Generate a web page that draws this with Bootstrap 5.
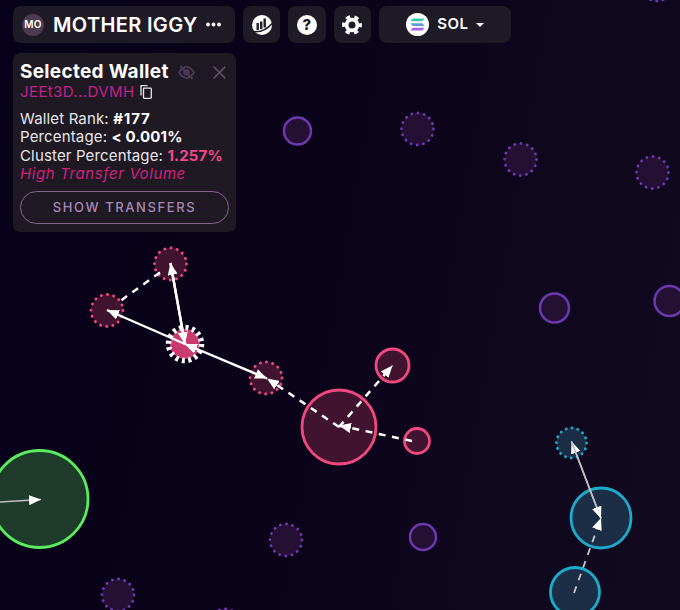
<!DOCTYPE html>
<html lang="en">
<head>
    <meta charset="UTF-8">
    <meta name="viewport" content="width=device-width, initial-scale=1.0">
    <title>Bubble Map</title>
    <link href="https://cdn.jsdelivr.net/npm/bootstrap@5.3.2/dist/css/bootstrap.min.css" rel="stylesheet">
    <style>
        html, body { height: 100%; margin: 0; }
        body {
            font-family: Inter, "Liberation Sans", sans-serif;
            color: #fff;
            background: #07011a;
        }
        .stage {
            height: 100vh;
            padding: 6px 0 0 13px;
            background: linear-gradient(100deg, #07011a 0%, #0a0319 45%, #110a20 100%);
        }
        .graph { position: absolute; top: 0; left: 0; width: 680px; height: 610px; }
        .toolbar { position: relative; height: 37px; gap: 8px; }
        .tool-btn {
            background: #1f1b26;
            border: 0;
            border-radius: 8px;
            color: #fff;
            padding: 0;
            height: 37px;
        }
        .title-btn { width: 222px; padding-left: 9px; }
        .square-btn { width: 37.3px; }
        .chain-btn { width: 132px; font-size: 15px; font-weight: 600; letter-spacing: .5px; }
        .chain-btn:hover, .chain-btn:active, .tool-btn:hover { background: #1f1b26; color: #fff; }
        .chain-btn::after { margin-left: 7px; vertical-align: .15em; }
        .token-logo {
            width: 22px; height: 22px;
            border-radius: 50%;
            background: #4c3a50;
            font-size: 10px;
            font-weight: 600;
            letter-spacing: .2px;
        }
        .token-name { font-size: 20px; font-weight: 600; margin-left: 9px; letter-spacing: .35px; white-space: nowrap; }
        .more-dots { margin-left: 8px; }
        .help-mark {
            width: 20px; height: 20px;
            border-radius: 50%;
            background: #fff;
            color: #1f1b26;
            font-size: 15px;
            font-weight: 800;
            line-height: 20px;
        }
        .wallet-panel {
            position: relative;
            width: 223px;
            height: 179px;
            margin-top: 10px;
            padding: 9px 7px 8px;
            background: #1e1923;
            border-radius: 7px;
            font-size: 15px;
            line-height: 18.5px;
        }
        .panel-title { font-size: 19px; font-weight: 700; line-height: 20px; letter-spacing: .3px; white-space: nowrap; }
        .eye-icon { margin-left: 9px; }
        .close-icon { margin-left: 18px; }
        .copy-icon { margin-left: 6px; }
        .wallet-addr { color: #c0228a; letter-spacing: .4px; margin-top: 1px; margin-bottom: 8px; height: 18.5px; }
        .stat-line { white-space: nowrap; letter-spacing: .15px; color: #e8e6ea; }
        .stat-line b { color: #fff; font-weight: 700; }
        .stat-line b.wide-num { letter-spacing: .9px; }
        .stat-line b.hot { color: #f2478a; }
        .stat-note { color: #d1207f; font-style: italic; letter-spacing: .6px; }
        .transfers-btn {
            display: block;
            width: 209px;
            height: 33px;
            margin-top: 7px;
            padding: 1px 0 0;
            border: 1.5px solid #85658f;
            border-radius: 17px;
            background: transparent;
            color: #a888b8;
            font-size: 13px;
            font-weight: 500;
            letter-spacing: 1.6px;
        }
        .transfers-btn:hover { background: transparent; color: #a888b8; border-color: #85658f; }
    </style>
</head>
<body>
    <div class="stage position-relative overflow-hidden">
        <!-- graph -->
        <svg class="graph" viewBox="0 0 680 610">
            <defs>
                <marker id="head" viewBox="0 0 12 10" refX="12" refY="5" markerWidth="12" markerHeight="10" markerUnits="userSpaceOnUse" orient="auto">
                    <path d="M0 0L12 5L0 10Z" fill="#fff"/>
                </marker>
            </defs>

            <!-- purple nodes -->
            <g fill="#241033" stroke="#6b38ad" stroke-width="2.5">
                <circle cx="297.5" cy="131" r="13.5"/>
                <circle cx="554.5" cy="308" r="14.5"/>
                <circle cx="669.5" cy="301" r="15"/>
                <circle cx="423" cy="537" r="13"/>
            </g>
            <g fill="#241033" stroke="#6b38ad" stroke-width="2.8" stroke-linecap="round" stroke-dasharray="0.2 6.08">
                <circle cx="417.5" cy="129" r="16"/>
                <circle cx="520.5" cy="159.5" r="16"/>
                <circle cx="652.5" cy="172.5" r="16"/>
                <circle cx="286" cy="540" r="16"/>
                <circle cx="118" cy="595" r="16"/>
                <circle cx="657" cy="-15" r="16"/>
                <circle cx="225" cy="625" r="16"/>
            </g>

            <!-- pink nodes -->
            <g fill="#40132f" stroke="#f1487f" stroke-width="2.8" stroke-linecap="round" stroke-dasharray="0.2 6.08">
                <circle cx="170.5" cy="264" r="16"/>
                <circle cx="107" cy="310.5" r="16"/>
                <circle cx="266" cy="378" r="16"/>
            </g>
            <g fill="#40132f" stroke="#f1487f" stroke-width="2.8">
                <circle cx="339" cy="427" r="37"/>
                <circle cx="392.5" cy="365.5" r="16.5"/>
                <circle cx="417" cy="441" r="12.5"/>
            </g>
            <circle cx="185" cy="344" r="15" fill="#c93a6e"/>

            <!-- blue nodes -->
            <g fill="#1c2e45" stroke="#1cacc9" stroke-width="2.8">
                <circle cx="601" cy="518" r="30"/>
                <circle cx="575" cy="592" r="24.5"/>
            </g>
            <circle cx="571.5" cy="443" r="15" fill="#1c2e45" stroke="#1cacc9" stroke-width="2.8" stroke-linecap="round" stroke-dasharray="0.2 5.69"/>

            <!-- green node -->
            <circle cx="39.5" cy="499" r="48.5" fill="#1e3b2b" stroke="#5ceb5f" stroke-width="2.8"/>

            <!-- selected ring -->
            <circle cx="185" cy="344" r="16.5" fill="none" stroke="#fff" stroke-width="5.5" stroke-dasharray="3 3.48"/>

            <!-- dashed edges -->
            <g stroke="#fff" stroke-width="2.5" stroke-dasharray="7 6.5" fill="none">
                <line x1="160" y1="272.5" x2="116" y2="304"/>
                <line x1="339" y1="427" x2="274" y2="383"/>
                <line x1="339" y1="427" x2="392.5" y2="365.5" marker-end="url(#head)"/>
                <line x1="412" y1="441" x2="339" y2="425.5" marker-end="url(#head)"/>
            </g>
            <line x1="574" y1="593" x2="601" y2="518" stroke="#c8c6cc" stroke-width="1.8" stroke-dasharray="7 6.5" marker-end="url(#head)"/>

            <!-- solid edges -->
            <g stroke="#fff" stroke-width="2.4">
                <line x1="185" y1="344" x2="107" y2="310" marker-start="url(#head)" marker-end="url(#head)"/>
                <line x1="185" y1="344" x2="170.5" y2="263" marker-end="url(#head)"/>
                <line x1="170.5" y1="263" x2="185" y2="344" marker-end="url(#head)"/>
                <line x1="185" y1="344" x2="267" y2="378.5" marker-end="url(#head)"/>
                <line x1="340" y1="427" x2="267" y2="378.5" stroke-width="0" marker-end="url(#head)"/>
                <line x1="267" y1="378.5" x2="185" y2="344" stroke-width="0" marker-end="url(#head)"/>
            </g>
            <g stroke="#c0bec6" stroke-width="1.6">
                <line x1="601" y1="518.5" x2="571.5" y2="441.5" marker-end="url(#head)"/>
                <line x1="571.5" y1="441.5" x2="601" y2="518.5" marker-end="url(#head)"/>
                <line x1="0" y1="502" x2="41" y2="499.5" marker-end="url(#head)"/>
            </g>
        </svg>

        <!-- top bar -->
        <div class="toolbar d-flex">
            <button class="btn tool-btn title-btn d-flex align-items-center">
                <span class="token-logo d-flex align-items-center justify-content-center">MO</span>
                <span class="token-name">MOTHER IGGY</span>
                <svg class="more-dots" width="15" height="5" viewBox="0 0 15 5"><g fill="#fff"><circle cx="2" cy="2.5" r="1.9"/><circle cx="7.5" cy="2.5" r="1.9"/><circle cx="13" cy="2.5" r="1.9"/></g></svg>
            </button>
            <button class="btn tool-btn square-btn d-flex align-items-center justify-content-center">
                <svg width="22" height="22" viewBox="0 0 22 22">
                    <circle cx="11" cy="11" r="10" fill="#fff"/>
                    <g fill="#1f1b26"><rect x="5.5" y="9" width="2.4" height="7"/><rect x="9" y="7.5" width="2.4" height="7.5"/><rect x="12.5" y="4.5" width="2.4" height="9"/></g>
                    <path d="M2 17.5C9 18.5 16 15.5 21 9.5" fill="none" stroke="#1f1b26" stroke-width="1.6"/>
                </svg>
            </button>
            <button class="btn tool-btn square-btn d-flex align-items-center justify-content-center">
                <span class="help-mark d-block text-center">?</span>
            </button>
            <button class="btn tool-btn square-btn d-flex align-items-center justify-content-center">
                <svg width="20" height="20" viewBox="0 0 20 20">
                    <circle cx="10" cy="10" r="5.4" fill="none" stroke="#fff" stroke-width="3.8"/>
                    <circle cx="10" cy="10" r="8.4" fill="none" stroke="#fff" stroke-width="3" stroke-dasharray="4.4 4.4" stroke-dashoffset="2.2"/>
                </svg>
            </button>
            <button class="btn tool-btn chain-btn dropdown-toggle d-flex align-items-center justify-content-center">
                <svg class="me-2" width="23" height="23" viewBox="0 0 23 23">
                    <defs>
                        <linearGradient id="solGrad" x1="0" y1="0" x2="0" y2="1">
                            <stop offset="0" stop-color="#2fd3a5"/>
                            <stop offset=".5" stop-color="#5c9fd6"/>
                            <stop offset="1" stop-color="#c04df0"/>
                        </linearGradient>
                    </defs>
                    <circle cx="11.5" cy="11.5" r="11.5" fill="#fff"/>
                    <path d="M6.5 5.5H18.5L16.5 8.2H4.5ZM4.5 10.2H16.5L18.5 12.9H6.5ZM6.5 14.8H18.5L16.5 17.5H4.5Z" fill="url(#solGrad)"/>
                </svg>
                SOL
            </button>
        </div>

        <!-- selected wallet -->
        <div class="wallet-panel">
            <div class="panel-title d-flex align-items-center">
                Selected Wallet
                <svg class="eye-icon" width="17" height="15" viewBox="0 0 17 15" fill="none" stroke="#4b3a55" stroke-width="1.8">
                    <path d="M1 7.5C4 3 6 2 8.5 2S13 3 16 7.5C13 12 11 13 8.5 13S4 12 1 7.5Z"/>
                    <circle cx="8.5" cy="7.5" r="2.4"/>
                    <path d="M2.5 1L14.5 14" stroke-width="2"/>
                </svg>
                <svg class="close-icon" width="13" height="13" viewBox="0 0 13 13" stroke="#5d4d63" stroke-width="1.7"><path d="M.7 .7L12.3 12.3M12.3 .7L.7 12.3"/></svg>
            </div>
            <div class="wallet-addr d-flex align-items-center">
                JEEt3D...DVMH
                <svg class="copy-icon" width="12" height="14" viewBox="0 0 12 14" fill="none" stroke="#e8e6ea" stroke-width="1.3">
                    <path d="M7.5 .7H1V10.5"/>
                    <rect x="3.5" y="3.2" width="7.8" height="10.1" rx=".8"/>
                </svg>
            </div>
            <div class="stat-line">Wallet Rank: <b class="wide-num">#177</b></div>
            <div class="stat-line">Percentage: <b>&lt; 0.001%</b></div>
            <div class="stat-line">Cluster Percentage: <b class="hot">1.257%</b></div>
            <div class="stat-line stat-note">High Transfer Volume</div>
            <button class="btn transfers-btn">SHOW TRANSFERS</button>
        </div>
    </div>

    <script src="https://cdn.jsdelivr.net/npm/bootstrap@5.3.2/dist/js/bootstrap.bundle.min.js"></script>
</body>
</html>
